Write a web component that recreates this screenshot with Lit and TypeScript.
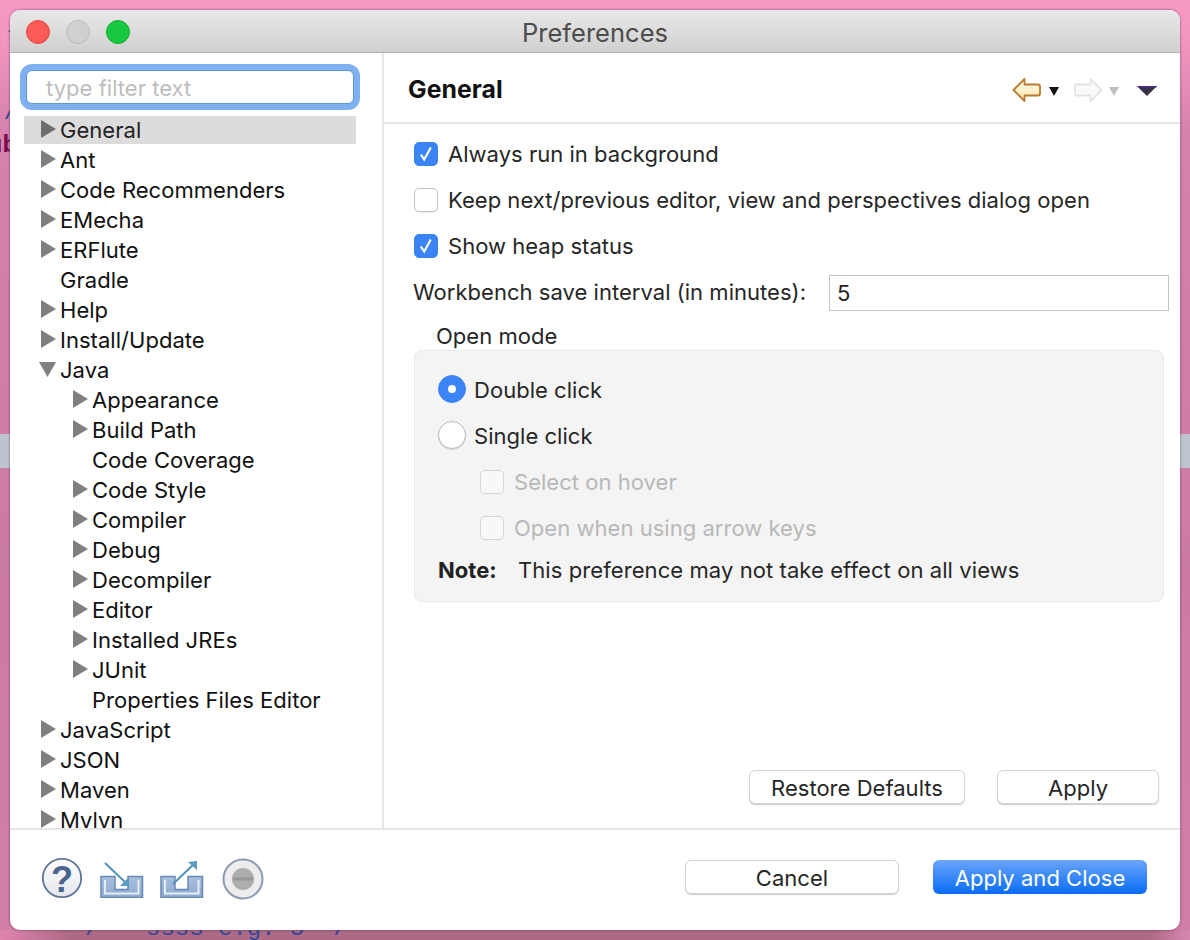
import { LitElement, html, css, svg } from 'lit';
import { customElement } from 'lit/decorators.js';

type TreeItem = { label: string; level: number; arrow: 'right' | 'down' | 'none'; selected?: boolean };

const tree: TreeItem[] = [
  { label: 'General', level: 0, arrow: 'right', selected: true },
  { label: 'Ant', level: 0, arrow: 'right' },
  { label: 'Code Recommenders', level: 0, arrow: 'right' },
  { label: 'EMecha', level: 0, arrow: 'right' },
  { label: 'ERFlute', level: 0, arrow: 'right' },
  { label: 'Gradle', level: 0, arrow: 'none' },
  { label: 'Help', level: 0, arrow: 'right' },
  { label: 'Install/Update', level: 0, arrow: 'right' },
  { label: 'Java', level: 0, arrow: 'down' },
  { label: 'Appearance', level: 1, arrow: 'right' },
  { label: 'Build Path', level: 1, arrow: 'right' },
  { label: 'Code Coverage', level: 1, arrow: 'none' },
  { label: 'Code Style', level: 1, arrow: 'right' },
  { label: 'Compiler', level: 1, arrow: 'right' },
  { label: 'Debug', level: 1, arrow: 'right' },
  { label: 'Decompiler', level: 1, arrow: 'right' },
  { label: 'Editor', level: 1, arrow: 'right' },
  { label: 'Installed JREs', level: 1, arrow: 'right' },
  { label: 'JUnit', level: 1, arrow: 'right' },
  { label: 'Properties Files Editor', level: 1, arrow: 'none' },
  { label: 'JavaScript', level: 0, arrow: 'right' },
  { label: 'JSON', level: 0, arrow: 'right' },
  { label: 'Maven', level: 0, arrow: 'right' },
  { label: 'Mylyn', level: 0, arrow: 'right' },
];

const tray = svg`
  <path d="M1 16.500h14v13h13v-13h14.500v21h-41.500z" fill="url(#tray)" stroke="#6787b4" stroke-width="1.500"/>
  <path d="M5 20v13.500h33.500v-13.500" fill="none" stroke="#e6edf6" stroke-width="2"/>`;

const trayDefs = svg`
  <defs>
    <linearGradient id="tray" x1="0" y1="0" x2="0" y2="1">
      <stop offset="0" stop-color="#a9c0de"/><stop offset="1" stop-color="#8eaad0"/>
    </linearGradient>
  </defs>`;

@customElement('app-root')
export class AppRoot extends LitElement {
  static styles = css`
    :host {
      display: block;
      position: relative;
      width: 1190px;
      height: 940px;
      overflow: hidden;
      box-sizing: border-box;
      padding: 10px;
      font-family: 'Inter', 'Liberation Sans', sans-serif;
      font-size: 22px;
      letter-spacing: 0.03px;
      color: #262626;
      background:
        linear-gradient(90deg, #e084ae 0, #ad6a86 70px, #ad6a86 1150px, #d888b0 1190px) 0 930px / 100% 10px no-repeat,
        linear-gradient(180deg, #f69ac4 0%, #f397c0 4%, #d582ad 14%, #cc7ba5 60%, #d27ea8 100%);
    }
    .bg-band {
      position: absolute;
      left: 0;
      right: 0;
      top: 434px;
      height: 34px;
      background: #bcc4cf;
    }
    .bg-text {
      position: absolute;
      font-family: 'Liberation Mono', monospace;
      font-size: 24px;
      line-height: 26px;
      letter-spacing: 0;
      white-space: pre;
      color: #34489c;
    }
    .bg-text.maroon { color: #7a0a50; font-weight: 700; }
    .window {
      position: relative;
      height: 920px;
      display: flex;
      flex-direction: column;
      background: #fff;
      border-radius: 10px;
      overflow: hidden;
      box-shadow: 0 0 3px rgba(60, 20, 40, 0.55);
    }
    .titlebar {
      height: 43px;
      flex: none;
      display: flex;
      align-items: center;
      position: relative;
      justify-content: center;
      box-sizing: border-box;
      padding-top: 3px;
      background: linear-gradient(180deg, #e8e8e8 0%, #d0d0d0 100%);
      border-bottom: 1px solid #b0b0b0;
      color: #4c4c4c;
      font-size: 25.500px;
    }
    .lights {
      position: absolute;
      left: 16px;
      top: 10px;
      display: flex;
      gap: 16px;
    }
    .light { width: 24px; height: 24px; border-radius: 50%; box-sizing: border-box; border: 1px solid; }
    .light.red { background: #fc5b57; border-color: #e2463f; }
    .light.grey { background: #d0d0d0; border-color: #bcbcbc; }
    .light.green { background: #17c840; border-color: #12ac2a; }
    .body { flex: 1; display: flex; min-height: 0; }
    .side {
      width: 374px;
      flex: none;
      box-sizing: border-box;
      border-right: 2px solid #e6e6e6;
      padding: 10px 0 0 14px;
      overflow: hidden;
      display: flex;
      flex-direction: column;
    }
    .filter {
      width: 328px;
      height: 34px;
      margin-left: 2px;
      box-sizing: border-box;
      flex: none;
      background: #fff;
      border: 1px solid #5f93dc;
      border-radius: 6px;
      box-shadow: 0 0 0 6px #7fb0f0;
      padding: 0 19px;
      line-height: 34px;
      color: #bdbdbd;
      margin-top: 7px;
    }
    .tree { margin-top: 12px; width: 332px; }
    .row {
      height: 30px;
      display: flex;
      align-items: center;
      color: #111;
      white-space: nowrap;
    }
    .row.selected { background: #dcdcdc; height: 28px; margin-bottom: 1px; color: #222; }
    .row svg { flex: none; display: block; }
    .arrow-box { width: 36px; flex: none; display: flex; justify-content: flex-end; padding-right: 4px; box-sizing: border-box; }
    .main { flex: 1; display: flex; flex-direction: column; min-width: 0; }
    .head {
      height: 71px;
      flex: none;
      box-sizing: border-box;
      border-bottom: 2px solid #e6e6e6;
      display: flex;
      align-items: center;
      padding: 2px 22px 0 24px;
    }
    .head h1 { flex: 1; margin: 0; font-size: 24.800px; font-weight: 700; color: #111; }
    .head svg { margin-top: 2px; }
    .content {
      flex: 1;
      padding: 7px 11px 0 30px;
      display: flex;
      flex-direction: column;
    }
    .line { height: 46px; display: flex; align-items: center; flex: none; white-space: nowrap; }
    .box {
      width: 24px;
      height: 24px;
      flex: none;
      box-sizing: border-box;
      border-radius: 5px;
      margin-right: 10px;
      display: flex;
      align-items: center;
      justify-content: center;
      border: 1px solid #c4c4c4;
      background: #fff;
      box-shadow: 0 1px 1px rgba(0, 0, 0, 0.08);
    }
    .box.on { background: #3b84f6; border-color: #3b84f6; box-shadow: none; }
    .box.off { background: #f8f8f8; border-color: #d8d8d8; box-shadow: none; }
    .interval { margin-left: -1px; }
    .interval input {
      all: unset;
      box-sizing: border-box;
      width: 340px;
      height: 36px;
      margin: 2px 0 0 23px;
      border: 1px solid #c4c4c4;
      padding: 0 7px;
      font: inherit;
      color: #222;
    }
    .legend { height: 28px; line-height: 28px; margin: 7px 0 0 22px; flex: none; }
    .group {
      width: 750px;
      height: 252px;
      flex: none;
      box-sizing: border-box;
      background: #f4f4f4;
      border: 1px solid #e9e9e9;
      border-radius: 8px;
      padding: 16px 23px 0;
      display: flex;
      flex-direction: column;
    }
    .radio {
      width: 28px;
      height: 28px;
      flex: none;
      box-sizing: border-box;
      border-radius: 50%;
      margin: -2px 8px 0 0;
      border: 1px solid #bcbcbc;
      background: #fff;
      box-shadow: 0 1px 1px rgba(0, 0, 0, 0.12);
      display: flex;
      align-items: center;
      justify-content: center;
    }
    .radio.on { background: #3b84f6; border-color: #3b84f6; box-shadow: none; }
    .radio.on::after { content: ''; width: 8px; height: 8px; border-radius: 50%; background: #fff; }
    .sub { margin-left: 42px; color: #b8b8b8; }
    .note { height: 38px; }
    .note b { width: 80px; flex: none; color: #222; }
    .note span { letter-spacing: 0.08px; }
    .actions {
      margin-top: auto;
      display: flex;
      justify-content: flex-end;
      gap: 32px;
      padding: 0 10px 24px 0;
    }
    .btn {
      height: 34px;
      box-sizing: border-box;
      padding-top: 2px;
      border: 1px solid #d4d4d4;
      border-radius: 6px;
      background: #fff;
      box-shadow: 0 1px 1px rgba(0, 0, 0, 0.2);
      display: flex;
      align-items: center;
      justify-content: center;
      color: #262626;
      flex: none;
    }
    .footer {
      height: 102px;
      flex: none;
      box-sizing: border-box;
      border-top: 2px solid #e6e6e6;
      display: flex;
      align-items: flex-start;
      padding: 30px 33px 0 30px;
    }
    .footer .icons { flex: 1; display: flex; align-items: center; gap: 16px; height: 38px; }
    .footer .btns { display: flex; gap: 34px; }
    .btn.primary {
      background: linear-gradient(180deg, #6aa5f8 0%, #0a6cf8 100%);
      border: none;
      box-shadow: none;
      color: #fff;
    }
  `;

  arrow(item: TreeItem) {
    if (item.arrow === 'none') return html`<span class="arrow-box"></span>`;
    const fill = item.selected ? '#6e6e6e' : '#808080';
    return html`<span class="arrow-box">${item.arrow === 'right'
      ? html`<svg width="15" height="18" viewBox="0 0 15 18" style="margin-top:-2px"><path d="M0 0L15 9L0 18Z" fill=${fill}/></svg>`
      : html`<svg width="17" height="15" viewBox="0 0 17 15" style="margin-top:-1px"><path d="M0 0H17L8.500 15Z" fill=${fill}/></svg>`}</span>`;
  }

  check() {
    return html`<svg width="14" height="16" viewBox="0 0 14 16"><path d="M1.800 8.500L5.200 13.500L11.800 1.500" fill="none" stroke="#fff" stroke-width="2.200"/></svg>`;
  }

  render() {
    return html`
      <div class="bg-band"></div>
      <div class="bg-text" style="left:-9px;top:27px">:*</div>
      <div class="bg-text" style="left:-11px;top:58px">:</div>
      <div class="bg-text" style="left:-11px;top:100px">:/</div>
      <div class="bg-text maroon" style="left:-12px;top:133px">ub</div>
      <div class="bg-text" style="left:85px;top:916px">/</div>
      <div class="bg-text" style="left:146px;top:916px">ssss e.g. 5  /</div>

      <div class="window">
        <div class="titlebar">
          <div class="lights">
            <span class="light red"></span><span class="light grey"></span><span class="light green"></span>
          </div>
          Preferences
        </div>
        <div class="body">
          <div class="side">
            <div class="filter">type filter text</div>
            <div class="tree">
              ${tree.map(item => html`
                <div class="row ${item.selected ? 'selected' : ''}" style="padding-left:${item.level * 32}px">
                  ${this.arrow(item)}<span>${item.label}</span>
                </div>
              `)}
            </div>
          </div>
          <div class="main">
            <div class="head">
              <h1>General</h1>
              <svg width="146" height="26" viewBox="0 0 146 26">
                <defs>
                  <linearGradient id="back" x1="0" y1="0" x2="0" y2="1">
                    <stop offset="0" stop-color="#fffdf2"/><stop offset="1" stop-color="#fde3a4"/>
                  </linearGradient>
                </defs>
                <path d="M1.500 13L12.500 2V7.500H26a2 2 0 0 1 2 2V16.500a2 2 0 0 1-2 2H12.500V24Z" fill="url(#back)" stroke="#b87a2c" stroke-width="1.800" stroke-linejoin="round"/>
                <path d="M37 10H47L42 19Z" fill="#111"/>
                <path d="M89.500 13L78.500 2V7.500H65a2 2 0 0 0-2 2V16.500a2 2 0 0 0 2 2H78.500V24Z" fill="#fafafa" stroke="#e4e4e4" stroke-width="1.800" stroke-linejoin="round"/>
                <path d="M97 10H107L102 19Z" fill="#c0c0c0"/>
                <path d="M125 9H145L135 19Z" fill="#3b3148"/>
                <path d="M125 9H145L144 10.500H127L135 19Z" fill="#4a2a90"/>
              </svg>
            </div>
            <div class="content">
              <div class="line"><span class="box on">${this.check()}</span>Always run in background</div>
              <div class="line"><span class="box"></span>Keep next/previous editor, view and perspectives dialog open</div>
              <div class="line"><span class="box on">${this.check()}</span>Show heap status</div>
              <div class="line interval">Workbench save interval (in minutes):<input value="5" /></div>
              <div class="legend">Open mode</div>
              <div class="group">
                <div class="line"><span class="radio on"></span>Double click</div>
                <div class="line"><span class="radio"></span>Single click</div>
                <div class="line sub"><span class="box off"></span>Select on hover</div>
                <div class="line sub"><span class="box off"></span>Open when using arrow keys</div>
                <div class="line note"><b>Note:</b><span>This preference may not take effect on all views</span></div>
              </div>
              <div class="actions">
                <div class="btn" style="width:216px">Restore Defaults</div>
                <div class="btn" style="width:162px">Apply</div>
              </div>
            </div>
          </div>
        </div>
        <div class="footer">
          <div class="icons">
            <svg width="44" height="44" viewBox="0 0 44 44">
              <defs>
                <linearGradient id="help" x1="0" y1="0" x2="0" y2="1">
                  <stop offset="0" stop-color="#ffffff"/><stop offset="1" stop-color="#e4e6ea"/>
                </linearGradient>
              </defs>
              <circle cx="22" cy="21" r="19.200" fill="url(#help)" stroke="#5f7497" stroke-width="1.800"/>
              <text x="22" y="34.500" text-anchor="middle" font-family="Liberation Sans" font-weight="700" font-size="36" fill="#4a6690">?</text>
            </svg>
            <svg width="44" height="38" viewBox="0 0 44 38">
              ${trayDefs}${tray}
              <path d="M5 3L25 22" stroke="#4f93bd" stroke-width="2" fill="none"/>
              <path d="M29 26H20L29 17Z" fill="#5a9ac0"/>
            </svg>
            <svg width="44" height="38" viewBox="0 0 44 38">
              ${tray}
              <path d="M13 24L33 5" stroke="#4f93bd" stroke-width="2" fill="none"/>
              <path d="M37 1L28 2L37 10Z" fill="#5a9ac0"/>
            </svg>
            <svg width="42" height="42" viewBox="0 0 42 42" style="margin-left:2px">
              <circle cx="21" cy="21" r="19.500" fill="#ededed" stroke="#8c9bb2" stroke-width="2"/>
              <circle cx="21" cy="21" r="11" fill="#adadad"/>
              <path d="M11 21H31" stroke="#979797" stroke-width="3"/>
            </svg>
          </div>
          <div class="btns">
            <div class="btn" style="width:214px">Cancel</div>
            <div class="btn primary" style="width:214px">Apply and Close</div>
          </div>
        </div>
      </div>
    `;
  }
}
